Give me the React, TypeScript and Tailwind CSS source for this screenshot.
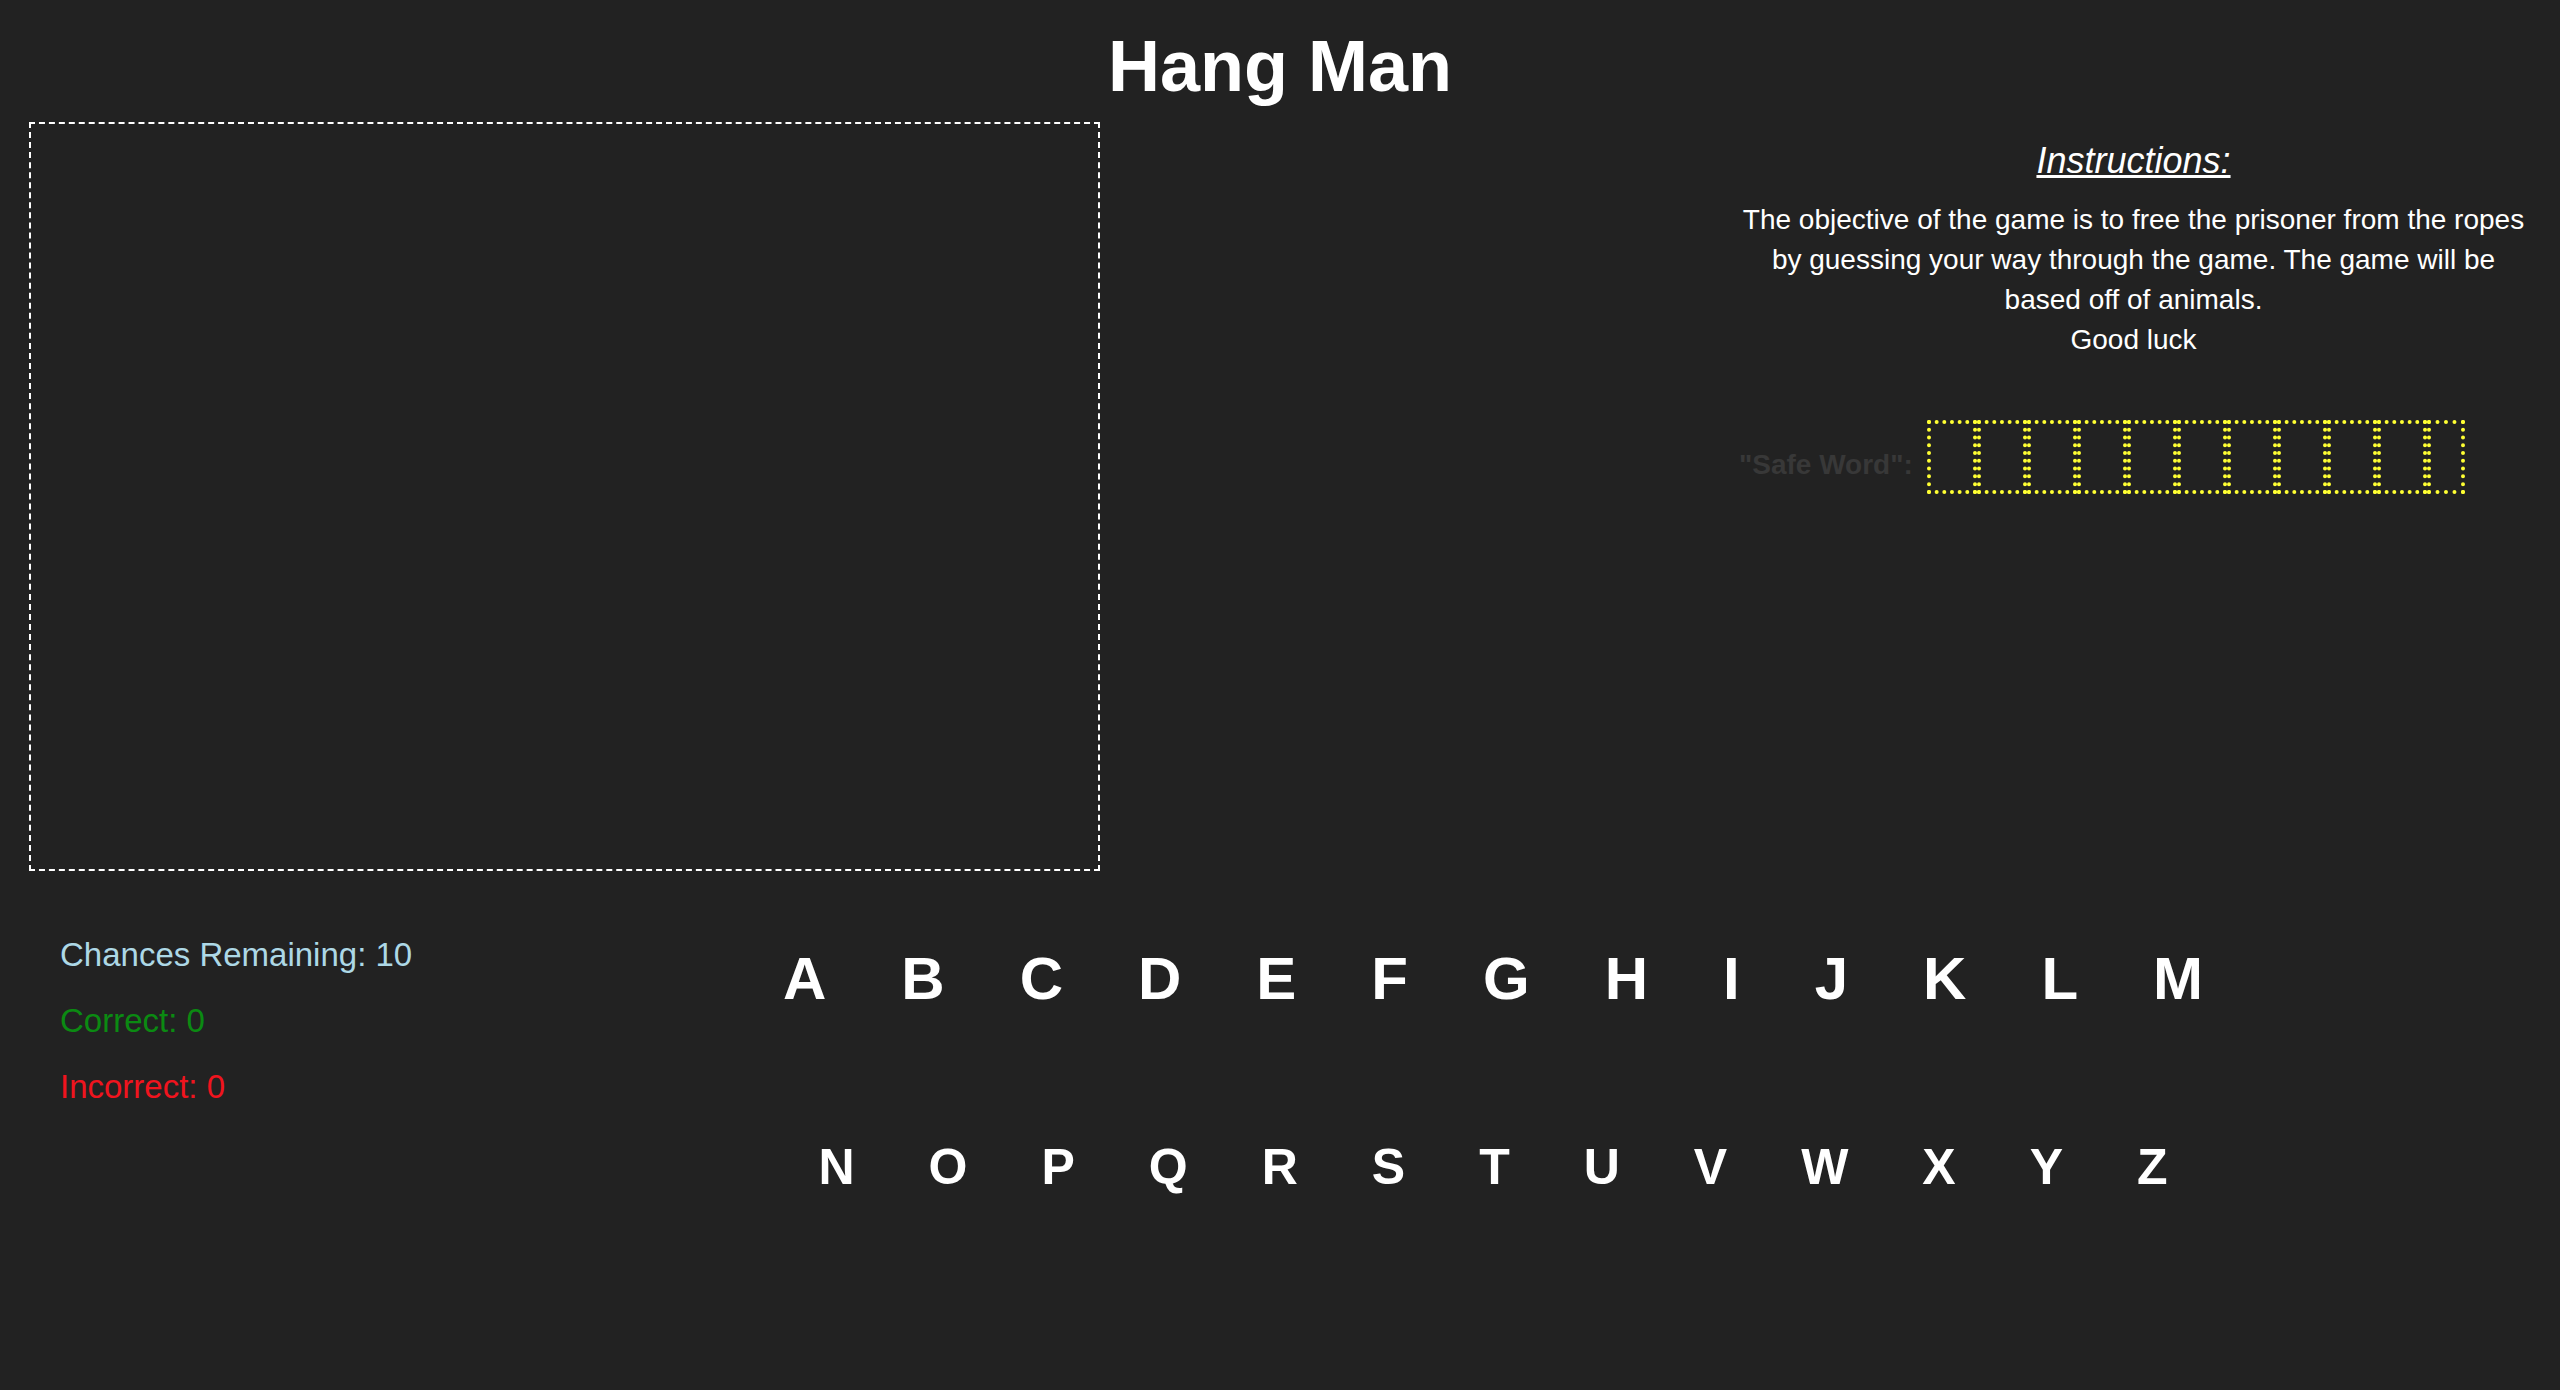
const ROW_ONE = ["A", "B", "C", "D", "E", "F", "G", "H", "I", "J", "K", "L", "M"];
const ROW_TWO = ["N", "O", "P", "Q", "R", "S", "T", "U", "V", "W", "X", "Y", "Z"];

// blanks for the hidden word; the last one is narrower in the original
const BLANKS = [50, 50, 50, 50, 50, 50, 50, 50, 50, 50, 38];

function Stats() {
  return (
    <div className="w-[426px] shrink-0 pl-[60px] pt-[51px] text-[33px] leading-[66px]">
      <p className="text-[#add8e6]">Chances Remaining: 10</p>
      <p className="text-[#0b8a12]">Correct: 0</p>
      <p className="text-[#f0141e]">Incorrect: 0</p>
    </div>
  );
}

function Keyboard() {
  return (
    <div className="flex-1 pt-[78px] font-bold text-white">
      <div className="flex justify-center gap-[75px] text-[60px] leading-none">
        {ROW_ONE.map((l) => (
          <span key={l} className="cursor-pointer">
            {l}
          </span>
        ))}
      </div>
      <div className="mt-[133px] flex justify-center gap-[74px] text-[50px] leading-none">
        {ROW_TWO.map((l) => (
          <span key={l} className="cursor-pointer">
            {l}
          </span>
        ))}
      </div>
    </div>
  );
}

function SafeWord() {
  return (
    <div className="mt-[60px] flex items-start pl-[32px]">
      <span className="mt-[31px] mr-[14px] text-[28px] font-bold leading-none text-[#383838]">
        "Safe Word":
      </span>
      <div className="flex">
        {BLANKS.map((w, i) => (
          <span
            key={i}
            className={`h-[74px] border-4 border-dotted border-[#ffff33] ${
              w === 50 ? "w-[50px]" : "w-[38px]"
            }`}
          />
        ))}
      </div>
    </div>
  );
}

export default function App() {
  return (
    <div className="min-h-[1390px] bg-[#222222] font-['Liberation_Sans',Arial,sans-serif] text-white">
      <h1 className="pt-[30px] text-center text-[72px] font-bold leading-none">Hang Man</h1>

      <div className="mt-[20px] flex">
        <div className="flex-1">
          <div className="ml-[29px] h-[749px] w-[1071px] border-2 border-dashed border-white" />
        </div>
        <div className="w-[853px] shrink-0">
          <div className="mx-auto w-[795px] text-center">
            <h3 className="mt-[19px] text-[36px] italic leading-[40px] underline">Instructions:</h3>
            <p className="mt-[19px] text-[28px] leading-[40px]">
              The objective of the game is to free the prisoner from the ropes by guessing your way
              through the game. The game will be based off of animals.
              <br />
              Good luck
            </p>
          </div>
          <SafeWord />
        </div>
      </div>

      <div className="flex">
        <Stats />
        <Keyboard />
      </div>
    </div>
  );
}
